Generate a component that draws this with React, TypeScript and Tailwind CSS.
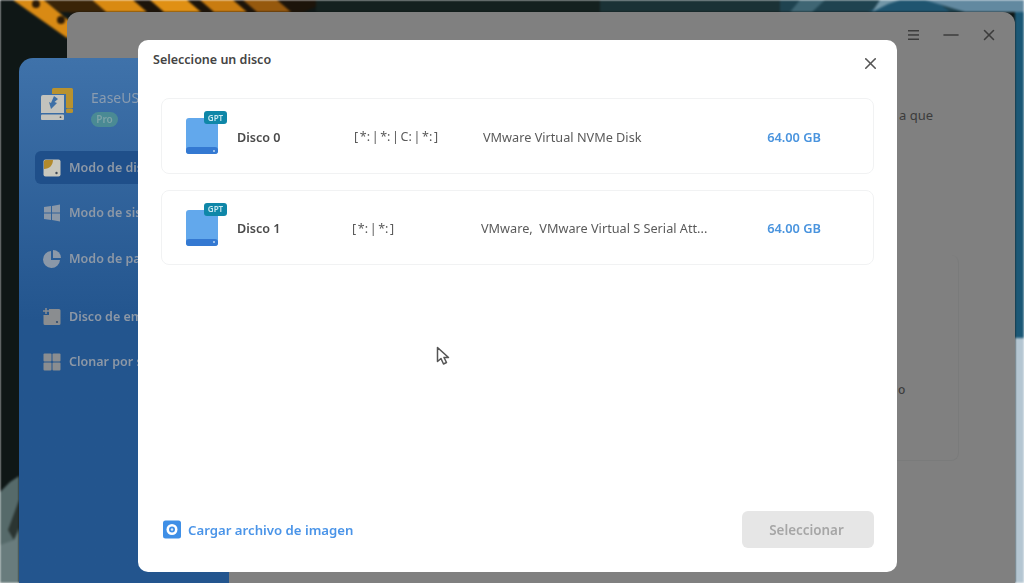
import { Minus, X } from "lucide-react";

const FONT = "font-['Noto_Sans','Open_Sans',sans-serif]";

type Disk = { name: string; parts: string; model: string; size: string };

const disks: Disk[] = [
  { name: "Disco 0", parts: "[ *: | *: | C: | *: ]", model: "VMware Virtual NVMe Disk", size: "64.00 GB" },
  { name: "Disco 1", parts: "[ *: | *: ]", model: "VMware,  VMware Virtual S Serial Att...", size: "64.00 GB" },
];

const sideItems = [
  { label: "Modo de disco", active: true, icon: "disk" },
  { label: "Modo de sistema", icon: "win" },
  { label: "Modo de partición", icon: "pie" },
  { label: "Disco de emergencia", icon: "plus", gap: true },
  { label: "Clonar por sectores", icon: "grid" },
];

function Wallpaper() {
  return (
    <svg className="absolute inset-0 h-full w-full blur-[1px]" viewBox="0 0 1024 583" preserveAspectRatio="none">
      <rect width="1024" height="583" fill="#0f1716" />
      {/* orange stripes, top left */}
      <polygon points="60,0 330,0 300,14 70,14" fill="#1c140a" />
      <polygon points="13,0 44,0 80,30 67,38" fill="#d98a14" />
      <polygon points="92,0 133,0 147,12 106,12" fill="#d98a12" />
      <polygon points="150,0 187,0 201,12 164,12" fill="#e09014" />
      <polygon points="200,0 233,0 247,12 214,12" fill="#c97c10" />
      <polygon points="243,0 277,0 291,12 257,12" fill="#96590e" />
      <polygon points="44,0 92,0 106,12 60,12" fill="#3a2408" />
      <circle cx="36" cy="4" r="4" fill="#2a1a08" />
      <circle cx="61" cy="20" r="4" fill="#2a1a08" />
      {/* teal, top right */}
      <rect x="316" y="0" width="708" height="12" fill="#14211f" />
      <rect x="600" y="0" width="424" height="12" fill="#1b3236" />
      <rect x="780" y="0" width="244" height="12" fill="#1f4350" />
      <polygon points="790,12 800,0 825,0 812,12" fill="#3f6674" />
      <polygon points="868,12 890,0 935,0 950,12" fill="#1f5570" />
      <polygon points="872,12 880,0 900,0 888,4" fill="#7397a8" />
      <polygon points="925,0 1024,0 1024,12 965,12" fill="#6289a0" />
      <rect x="1015" y="12" width="9" height="326" fill="#1b5876" />
      <rect x="1015" y="338" width="9" height="245" fill="#b4c6d2" />
      {/* bottom left */}
      <polygon points="0,492 10,482 19,476 19,583 0,583" fill="#566a6a" />
      <polygon points="8,530 19,500 19,528 14,540" fill="#2b3532" />
      <polygon points="0,545 14,540 19,530 19,583 0,583" fill="#697c7d" />
    </svg>
  );
}

function SideIcon({ kind }: { kind: string }) {
  if (kind === "disk")
    return (
      <svg viewBox="0 0 18 18" className="h-[18px] w-[18px]">
        <rect x="0.5" y="0.5" width="17" height="17" rx="2" fill="#c9c8bd" />
        <path d="M1 2.5a1.500 1.500 0 0 1 1.500-1.500H10c0 5-3.500 9-9 9z" fill="#b28a2c" />
        <circle cx="13.5" cy="14" r="1.2" fill="#3f4a58" />
      </svg>
    );
  if (kind === "win")
    return (
      <svg viewBox="0 0 18 18" className="h-[18px] w-[18px]" fill="#8b98a8">
        <path d="M1 3l7-1v6.500H1zM9 2l8-1.500v8H9zM1 9.500h7V16l-7-1zM9 9.500h8v8l-8-1.500z" />
      </svg>
    );
  if (kind === "pie")
    return (
      <svg viewBox="0 0 18 18" className="h-[18px] w-[18px]" fill="#8b98a8">
        <path d="M8 1a8.500 8.500 0 1 0 9 9H8z" />
        <path d="M10 0a8 8 0 0 1 8 8h-8z" />
      </svg>
    );
  if (kind === "plus")
    return (
      <svg viewBox="0 0 18 18" className="h-[18px] w-[18px]">
        <path d="M6 1h10a1.500 1.500 0 0 1 1.500 1.500v13A1.500 1.500 0 0 1 16 17H2a1.500 1.500 0 0 1-1.500-1.500V7H6z" fill="#8a8d90" />
        <path d="M3 0v6M0 3h6" stroke="#8a8d90" strokeWidth="1.500" />
        <circle cx="14" cy="14" r="1.100" fill="#2d4a6e" />
      </svg>
    );
  return (
    <svg viewBox="0 0 18 18" className="h-[18px] w-[18px]" fill="#8a8d90">
      <rect x="0.500" y="0.500" width="8" height="8" rx="1" />
      <rect x="9.500" y="0.500" width="8" height="8" rx="1" />
      <rect x="0.500" y="9.500" width="8" height="8" rx="1" />
      <rect x="9.500" y="9.500" width="8" height="8" rx="1" />
    </svg>
  );
}

function Logo() {
  return (
    <svg viewBox="0 0 33 32" className="h-[32px] w-[33px]">
      <path d="M11 1.500a1.500 1.500 0 0 1 1.500-1.500H30.500A1.500 1.500 0 0 1 32 1.500V20h-7V6H11z" fill="#b8922f" />
      <rect x="25" y="20.500" width="7" height="4.500" rx="1.500" fill="#b8922f" />
      <path d="M2 7h21v18H0V9a2 2 0 0 1 2-2z" fill="#c3c3bd" />
      <path d="M13 8l4 3-3.500 3 2.500 1-6 6-2-7 2 1z" fill="#3d6fa6" />
      <rect x="0" y="26.500" width="23" height="5.500" rx="1" fill="#c3c3bd" />
      <circle cx="19.500" cy="29.200" r="0.900" fill="#555" />
    </svg>
  );
}

function Sidebar() {
  return (
    <div className="absolute left-[19px] top-[58px] bottom-0 w-[210px] rounded-t-[14px] bg-linear-to-b from-[#3f72aa] to-[#23558e] to-50% pl-[16px] pt-[30px]">
      <div className="flex items-start gap-[17px] pl-[6px]">
        <Logo />
        <div className="pt-[1px]">
          <div className="text-[14px] leading-[18px] text-[#8a9cb0]">EaseUS</div>
          <div className="mt-[5px] flex h-[15px] w-[27px] items-center justify-center rounded-full bg-[#4a8a94] text-[10px] font-semibold text-[#7da3a8]">Pro</div>
        </div>
      </div>
      <div className="mt-[24px] flex flex-col gap-[12.5px] pr-[8px]">
        {sideItems.map((it) => (
          <div key={it.label} className={`flex h-[33px] items-center gap-[8px] whitespace-nowrap rounded-[6px] pl-[8px] text-[12.5px] font-semibold text-[#8d98a6] ${it.active ? "bg-[#1f4f8a]" : ""} ${it.gap ? "mt-[12.5px]" : ""}`}>
            <SideIcon kind={it.icon} />
            <span className="pt-[1px]">{it.label}</span>
          </div>
        ))}
      </div>
    </div>
  );
}

function MainWindow() {
  return (
    <div className="absolute left-[67px] top-[12px] bottom-0 w-[948px] rounded-t-[12px] bg-[#808080] text-[#3c3c3c]">
      <div className="flex h-[45px] items-center justify-end pr-[7px]">
        <div className="flex w-[38px] justify-center">
          <svg viewBox="0 0 11 10" className="h-[10px] w-[11px]" fill="#3c3c3c">
            <rect width="11" height="1.500" />
            <rect y="4.200" width="11" height="1.500" />
            <rect y="8.500" width="11" height="1.500" />
          </svg>
        </div>
        <div className="flex w-[38px] justify-center">
          <Minus size={24} strokeWidth={1.6} />
        </div>
        <div className="flex w-[38px] justify-center">
          <X size={18} strokeWidth={2.1} />
        </div>
      </div>
      <div className="absolute left-[832px] top-[94px] text-[13px]">a que</div>
      <div className="absolute left-[831px] top-[369px] text-[12px] font-medium">o</div>
      <div className="absolute left-[830px] top-[243px] h-[206px] w-[62px] rounded-r-[8px] border-r border-b border-[#7a7b7b]" />
    </div>
  );
}

function DiskIcon() {
  return (
    <div className="relative h-[36px] w-[32px]">
      <div className="absolute inset-0 rounded-[3px] bg-[#62a8ec]" />
      <div className="absolute bottom-0 left-0 right-0 flex h-[7px] items-center justify-end rounded-[3px] bg-[#3479d2] pr-[3px]">
        <div className="h-[2px] w-[2px] rounded-full bg-[#bcd8f5]" />
      </div>
      <div className="absolute -right-[9px] -top-[7px] flex h-[13px] w-[23px] items-center justify-center rounded-[3px] bg-[#0f87a8] text-[8px] font-semibold text-[#cdeaf2]">GPT</div>
    </div>
  );
}

function DiskRow({ d, idx }: { d: Disk; idx: number }) {
  return (
    <div className={`flex items-center rounded-[8px] border border-[#f1f2f3] pl-[24px] pr-[52px] ${idx === 0 ? "h-[76px]" : "h-[75px]"}`}>
      <DiskIcon />
      <div className={`ml-[19px] flex items-center text-[12.6px] font-semibold text-[#4a4a4a] ${idx === 0 ? "w-[117px] pt-[4px]" : "w-[115px] pt-[3px]"}`}>{d.name}</div>
      <div className="w-[129px] pt-[3px] text-[12.5px] text-[#5a5a5a] [word-spacing:-1.6px]">{d.parts}</div>
      <div className="flex-1 whitespace-pre pt-[3px] text-[12.7px] text-[#5a5a5a]">{d.model}</div>
      <div className="pt-[3px] text-[12.8px] font-semibold text-[#4a94de]">{d.size}</div>
    </div>
  );
}

function Cursor() {
  return (
    <svg viewBox="0 0 14 20" className="absolute left-[298px] top-[306px] h-[20px] w-[14px]">
      <path d="M1.500 1.500v14l3.500-3 2.500 5.500 3-1.500-2.500-5h4.500z" fill="#fff" stroke="#555" strokeWidth="1.500" strokeLinejoin="round" />
    </svg>
  );
}

function Modal() {
  return (
    <div className="absolute left-[138px] top-[40px] flex h-[532px] w-[759px] flex-col rounded-[10px] bg-white">
      <div className="flex h-[58px] items-start justify-between pl-[15px] pr-[17px] pt-[11px]">
        <div className="text-[12.5px] font-semibold text-[#444]">Seleccione un disco</div>
        <X size={19} strokeWidth={2} className="mt-[2.500px] text-[#555]" />
      </div>
      <div className="flex flex-col gap-[16px] px-[23px]">
        {disks.map((d, i) => (
          <DiskRow key={d.name} d={d} idx={i} />
        ))}
      </div>
      <Cursor />
      <div className="mt-auto flex items-center justify-between pb-[24px] pl-[25px] pr-[23px]">
        <div className="flex items-center gap-[7px] text-[13.2px] font-semibold text-[#4a94e8]">
          <svg viewBox="0 0 18 18" className="h-[19px] w-[18px]">
            <rect width="18" height="18" rx="2.500" fill="#3f8fe6" />
            <circle cx="9" cy="9" r="5.500" fill="#fff" />
            <circle cx="9" cy="9" r="3" fill="#3f8fe6" />
            <circle cx="9" cy="9" r="1.200" fill="#d8eafc" />
          </svg>
          <span className="pt-[2px]">Cargar archivo de imagen</span>
        </div>
        <div className="flex h-[37px] w-[132px] items-center justify-center rounded-[6px] bg-[#e6e6e6] pr-[3px] pt-[2px] text-[13.4px] font-semibold text-[#a6a6a6]">Seleccionar</div>
      </div>
    </div>
  );
}

export default function App() {
  return (
    <div className={`relative h-[583px] w-[1024px] overflow-hidden ${FONT} blur-[0.5px]`}>
      <Wallpaper />
      <MainWindow />
      <Sidebar />
      <Modal />
    </div>
  );
}
